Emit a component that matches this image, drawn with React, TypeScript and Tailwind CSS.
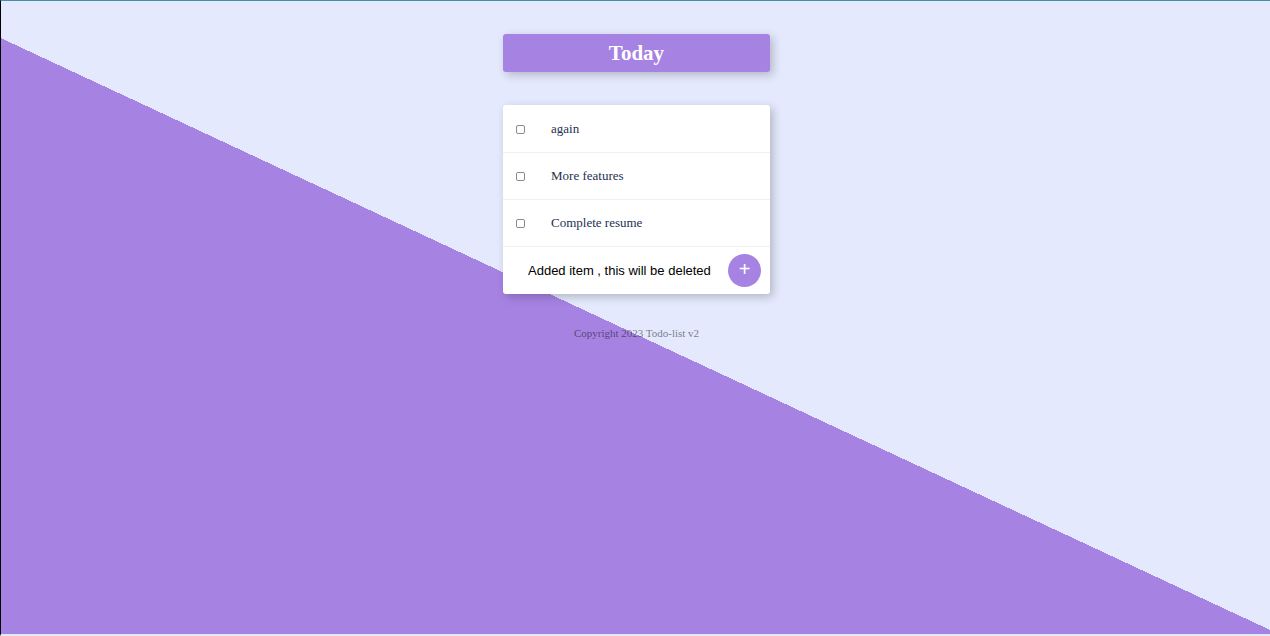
import { useState } from "react";

const items = ["again", "More features", "Complete resume"];

const cardShadow = "shadow-[3px_3px_10px_0px_rgba(0,0,0,0.22)]";

function TodoRow({ label }: { label: string }) {
  return (
    <label className="flex h-[47px] items-center border-b border-[#f1f1f1] pl-[13px] text-[#1e3054]">
      <input
        type="checkbox"
        className="size-[9px] shrink-0 appearance-none rounded-[2px] border border-[#8c8c8c] bg-white checked:bg-[#a683e3]"
      />
      <span className="ml-[26px] text-[13px] leading-4">{label}</span>
    </label>
  );
}

export default function App() {
  const [draft, setDraft] = useState("Added item , this will be deleted");

  return (
    <div className="flex min-h-screen flex-col items-center border-t border-b-2 border-l border-t-[#3f93a5] border-b-[#e1ebf5] border-l-black bg-[linear-gradient(25deg,#a683e3_calc(50%_-_15px),#e4e9fd_calc(50%_-_15px))] pt-[33px] pl-0.5 font-['Liberation_Serif',serif]">
      <header
        className={`flex h-[38px] w-[267px] items-center justify-center rounded-[3px] bg-[#a683e3] ${cardShadow}`}
      >
        <h1 className="text-[21px] leading-6 font-bold text-white">Today</h1>
      </header>

      <main className={`mt-[33px] w-[267px] rounded-[3px] bg-white pt-px ${cardShadow}`}>
        {items.map((item) => (
          <TodoRow key={item} label={item} />
        ))}
        <form
          className="flex h-[47px] items-center pr-[9px] pl-[25px]"
          onSubmit={(event) => event.preventDefault()}
        >
          <input
            type="text"
            aria-label="New item"
            value={draft}
            onChange={(event) => setDraft(event.target.value)}
            className="min-w-0 flex-1 bg-transparent font-['Liberation_Sans',sans-serif] text-[13px] leading-4 text-black outline-none"
          />
          <button
            type="submit"
            className="flex size-[33px] shrink-0 items-center justify-center rounded-full bg-[#a683e3] pb-1 font-['Liberation_Sans',sans-serif] text-[20px] leading-5 text-white"
          >
            +
          </button>
        </form>
      </main>

      <footer className="mt-[33px] text-[11px] leading-3 text-black/50">Copyright 2023 Todo-list v2</footer>
    </div>
  );
}
